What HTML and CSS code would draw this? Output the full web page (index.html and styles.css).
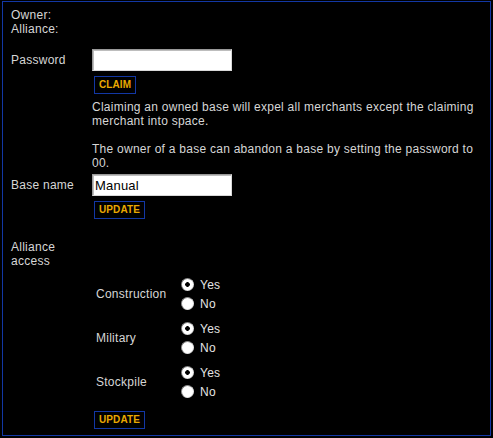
FILE: index.html
```html
<!DOCTYPE html>
<html>
<head>
<meta charset="utf-8">
<link rel="stylesheet" href="styles.css">
</head>
<body>
<div class="panel">
  <div class="info">Owner:<br>Alliance:</div>

  <div class="row row-password">
    <span class="label">Password</span>
    <input class="field" type="text" value="">
  </div>
  <div class="indent action-claim"><button class="btn">CLAIM</button></div>

  <div class="indent note">
    <p>Claiming an owned base will expel all merchants except the claiming merchant into space.</p>
    <p class="gap">The owner of a base can abandon a base by setting the password to 00.</p>
  </div>

  <div class="row row-name">
    <span class="label">Base name</span>
    <input class="field" type="text" value="Manual">
  </div>
  <div class="indent action-name"><button class="btn">UPDATE</button></div>

  <div class="label access-label">Alliance access</div>

  <div class="indent groups">
    <div class="group">
      <span class="glabel">Construction</span>
      <div class="opts">
        <label class="opt"><span class="radio checked"></span>Yes</label>
        <label class="opt"><span class="radio"></span>No</label>
      </div>
    </div>
    <div class="group">
      <span class="glabel">Military</span>
      <div class="opts">
        <label class="opt"><span class="radio checked"></span>Yes</label>
        <label class="opt"><span class="radio"></span>No</label>
      </div>
    </div>
    <div class="group">
      <span class="glabel">Stockpile</span>
      <div class="opts">
        <label class="opt"><span class="radio checked"></span>Yes</label>
        <label class="opt"><span class="radio"></span>No</label>
      </div>
    </div>
  </div>
  <div class="indent action-access"><button class="btn">UPDATE</button></div>
</div>
</body>
</html>
```

FILE: styles.css
```css
html, body {
  margin: 0;
  padding: 0;
  background: #000;
}
body {
  font-family: "Liberation Sans", Arial, sans-serif;
  font-size: 12px;
  line-height: 14px;
  letter-spacing: 0.26px;
  color: #d6d6d6;
}
.panel {
  box-sizing: border-box;
  margin: 1px 2px 0 2px;
  width: 489px;
  height: 435px;
  border: 1px solid #1237a4;
  padding: 6px 8px 0 8px;
}
.info {
  margin-top: 0;
}
.row {
  display: flex;
  align-items: center;
}
.label {
  width: 81px;
  flex: none;
}
.row-password { margin-top: 13px; }
.field {
  box-sizing: border-box;
  width: 140px;
  height: 22px;
  margin: 0;
  padding: 0 2px;
  background: #fff;
  border: 1px solid;
  border-color: #9a9a9a #d8d8d8 #d8d8d8 #9a9a9a;
  box-shadow: inset 1px 1px 0 #bdbdbd;
  font-family: "Liberation Sans", Arial, sans-serif;
  font-size: 13px;
  letter-spacing: 0.2px;
  color: #000;
  outline: none;
}
.indent { margin-left: 81px; }
.btn {
  display: block;
  margin: 0 0 0 2px;
  padding: 2px 4px;
  background: #000;
  border: 1px solid #1237a4;
  color: #e9a900;
  font-family: "Liberation Sans", Arial, sans-serif;
  font-weight: bold;
  font-size: 10px;
  line-height: 12px;
  letter-spacing: 0.1px;
  cursor: pointer;
}
.action-claim { margin-top: 5px; }
.note {
  margin-top: 6px;
  width: 387px;
}
.note p { margin: 0; }
.note p.gap { margin-top: 14px; }
.row-name { margin-top: 4px; }
.action-name { margin-top: 5px; }
.access-label {
  margin-top: 21px;
  width: 80px;
}
.groups {
  margin-top: 7px;
  display: flex;
  flex-direction: column;
  gap: 6px;
}
.group {
  display: flex;
  align-items: center;
}
.glabel {
  width: 85px;
  padding-left: 4px;
  flex: none;
}
.opts {
  display: flex;
  flex-direction: column;
}
.opt {
  display: flex;
  align-items: center;
  height: 19px;
  color: #e4e4e4;
}
.radio {
  box-sizing: border-box;
  width: 13px;
  height: 13px;
  margin-right: 6px;
  border-radius: 50%;
  border: 1px solid;
  border-color: #8a8a8a #e0e0e0 #e0e0e0 #8a8a8a;
  background: #fff;
}
.radio.checked {
  background: radial-gradient(circle, #000 0 2px, #fff 2.6px);
}
.action-access { margin-top: 10px; }
```
